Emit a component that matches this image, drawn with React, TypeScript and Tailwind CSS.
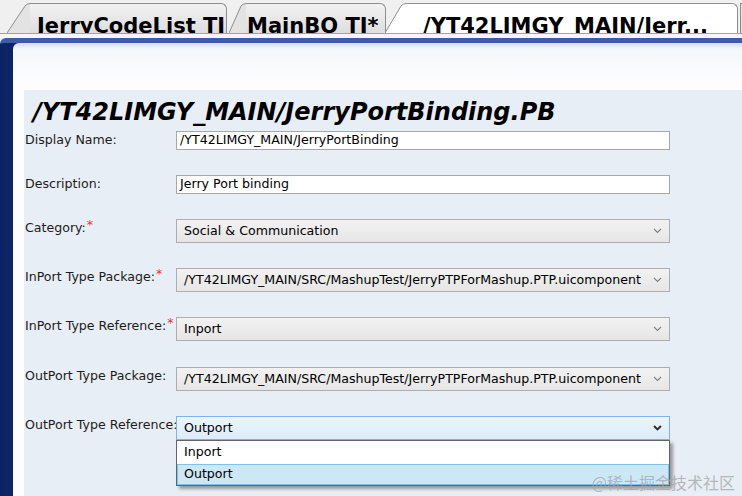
const uiFont = { fontFamily: '"DejaVu Sans", "Liberation Sans", sans-serif' };

interface TabProps {
    label: string;
    slant: number;
    width: number;
    pad: number;
    active?: boolean;
    className?: string;
}

function Tab({ label, slant, width, pad, active, className }: TabProps) {
    const fill = active ? "#ffffff" : "#e3e3e3";
    return (
        <div className={`flex h-[30px] ${className ?? ""}`}>
            <svg width={slant} height={30} className="block shrink-0">
                <path
                    d={`M0 30 L${slant - 5} 3 Q${slant - 3} 0.5 ${slant} 0.5 L${slant} 30 Z`}
                    fill={fill}
                />
                <path
                    d={`M0 30 L${slant - 5} 3 Q${slant - 3} 0.5 ${slant} 0.5`}
                    fill="none"
                    stroke="#8e8e8e"
                    strokeWidth={1}
                />
            </svg>
            <div
                className={`flex items-end overflow-hidden border-t border-r border-[#8e8e8e] rounded-tr-[6px] ${
                    active ? "bg-white" : "bg-[linear-gradient(to_bottom,#f2f2f2,#dedede)]"
                }`}
                style={{ width }}
            >
                <span
                    className="whitespace-nowrap text-[21px] font-bold leading-[22px] -mb-[4px] text-black"
                    style={{ paddingLeft: pad }}
                >
                    {label}
                </span>
            </div>
        </div>
    );
}

function Chevron({ dark }: { dark?: boolean }) {
    return (
        <svg width="9" height="6" viewBox="0 0 9 6" className="block">
            <polyline
                points="1,1 4.5,4.5 8,1"
                fill="none"
                stroke={dark ? "#2a2a2a" : "#808080"}
                strokeWidth={dark ? 1.8 : 1.1}
            />
        </svg>
    );
}

function TextInput({ value }: { value: string }) {
    return (
        <div className="flex h-[19px] w-[494px] items-center border border-[#a8a8a8] bg-white pl-[3px] text-[12.6px] text-black">
            {value}
        </div>
    );
}

function Select({ value, focused, children }: { value: string; focused?: boolean; children?: React.ReactNode }) {
    return (
        <div className="relative w-[494px]">
            <div
                className={`flex h-[24px] items-center justify-between border pl-[7px] pr-[7px] text-[12.6px] text-black ${
                    focused
                        ? "border-[#7eb4ea] bg-[linear-gradient(to_bottom,#ecf5fd,#dcecfc)]"
                        : "border-[#adadad] bg-[linear-gradient(to_bottom,#f2f2f2,#e6e6e6)]"
                }`}
            >
                <span className="whitespace-nowrap">{value}</span>
                <Chevron dark={focused} />
            </div>
            {children}
        </div>
    );
}

function Row({
    label,
    required,
    className,
    children,
}: {
    label: string;
    required?: boolean;
    className?: string;
    children: React.ReactNode;
}) {
    return (
        <div className={`flex items-start ${className ?? ""}`}>
            <div className="mt-[1px] w-[151px] whitespace-nowrap text-[12.6px] leading-[16px] text-[#1c1c1c]">
                {label}
                {required && <span className="relative -top-[3px] ml-[1px] text-[#e8343a]">*</span>}
            </div>
            {children}
        </div>
    );
}

export default function App() {
    return (
        <div className="relative flex h-[496px] w-[742px] flex-col overflow-hidden bg-[#f0f0f0]" style={uiFont}>
            {/* Editor tabs */}
            <div className="flex h-[33px] shrink-0 items-end bg-[#f0f0f0]">
                <Tab label="JerryCodeList TI" slant={23} width={197} pad={7} className="ml-[7px]" />
                <Tab label="MainBO TI*" slant={17} width={140} pad={1} className="ml-[2px]" />
                <Tab label="/YT42LIMGY_MAIN/Jerr..." slant={21} width={332} pad={17} active className="-ml-[1px]" />
                <div className="ml-[2px] h-[30px] flex-1 border-l border-t border-[#8e8e8e] bg-[#e3e3e3]" />
            </div>
            <div className="h-[1px] shrink-0 bg-[#a3a3a3]" />
            <div className="h-[4px] shrink-0 bg-[#f7f7f7]" />

            {/* Blue editor frame */}
            <div className="flex flex-1 rounded-tl-[6px] border-t-[5px] border-t-[#3d5ca4] bg-[linear-gradient(to_right,#0c2466,#1d3c88_35%,#4d6db5_50%,#6684c3)] pl-[13px]">
                <div className="flex flex-1 flex-col rounded-tl-[6px] bg-[linear-gradient(to_bottom,#d5deec,#f4f7fb_6px,#fdfdfe_40px)] pl-[11px] pt-[47px]">
                    <div className="flex-1 bg-[#e8eef5] pl-[1px] pt-[6px]">
                        <div className="h-[32px] pl-[8px] text-[24px] font-bold italic leading-[32px] text-black">
                            /YT42LIMGY_MAIN/JerryPortBinding.PB
                        </div>
                        <div className="mt-[3px] flex flex-col gap-[25px]">
                            <Row label="Display Name:">
                                <TextInput value="/YT42LIMGY_MAIN/JerryPortBinding" />
                            </Row>
                            <Row label="Description:">
                                <TextInput value="Jerry Port binding" />
                            </Row>
                            <Row label="Category:" required>
                                <Select value="Social & Communication" />
                            </Row>
                            <Row label="InPort Type Package:" required>
                                <Select value="/YT42LIMGY_MAIN/SRC/MashupTest/JerryPTPForMashup.PTP.uicomponent" />
                            </Row>
                            <Row label="InPort Type Reference:" required>
                                <Select value="Inport" />
                            </Row>
                            <Row label="OutPort Type Package:" className="mt-[1px]">
                                <Select value="/YT42LIMGY_MAIN/SRC/MashupTest/JerryPTPForMashup.PTP.uicomponent" />
                            </Row>
                            <Row label="OutPort Type Reference:">
                                <Select value="Outport" focused>
                                    {/* Open list */}
                                    <div className="absolute left-0 top-full z-10 w-full border border-[#646464] bg-white shadow-[3px_3px_3px_rgba(0,0,0,0.35)] text-[12.6px] text-black">
                                        <div className="flex h-[23px] items-center pl-[7px]">Inport</div>
                                        <div className="flex h-[21px] items-center border border-[#7ec3ea] bg-[#cce8f6] pl-[6px]">
                                            Outport
                                        </div>
                                    </div>
                                </Select>
                            </Row>
                        </div>
                    </div>
                </div>
            </div>

            <div
                className="absolute bottom-[4px] right-[7px] z-20 text-[16px] leading-[20px] text-[#a4a8ae]/80"
                style={{ fontFamily: '"Noto Sans CJK SC", sans-serif' }}
            >
                @稀土掘金技术社区
            </div>
        </div>
    );
}
